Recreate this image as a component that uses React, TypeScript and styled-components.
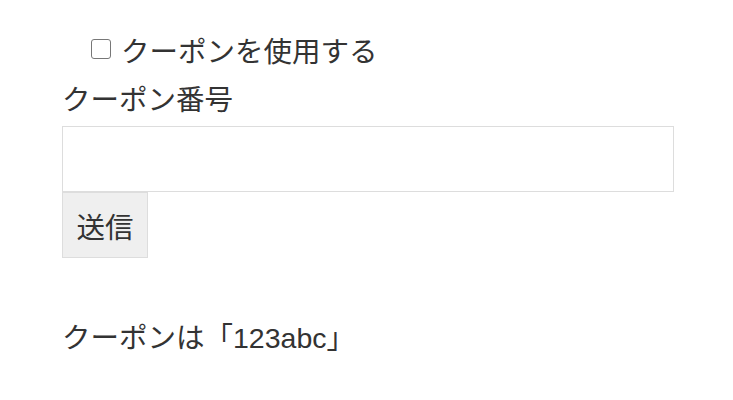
import React from "react";
import styled, { createGlobalStyle } from "styled-components";

const GlobalStyle = createGlobalStyle`
  body {
    margin: 0;
    background: #ffffff;
    font-family: "Liberation Sans", "Noto Sans CJK JP", sans-serif;
    color: #333333;
  }
`;

const Page = styled.div`
  padding: 32px 59px 0 62px;
  display: flex;
  flex-direction: column;
`;

const CheckRow = styled.label`
  display: flex;
  align-items: center;
  gap: 10px;
  margin-left: 29px;
  height: 34px;
  font-size: 28.5px;
`;

const Box = styled.input.attrs({ type: "checkbox" })`
  appearance: none;
  margin: 0;
  width: 20px;
  height: 20px;
  border: 1.5px solid #777777;
  border-radius: 3px;
  background: #ffffff;
`;

const Label = styled.div`
  margin-top: 17px;
  font-size: 28.5px;
  line-height: 34px;
`;

const Field = styled.input`
  box-sizing: border-box;
  margin-top: 9px;
  width: 612px;
  height: 66px;
  border: 1px solid #dddddd;
  outline: none;
  font-size: 26px;
`;

const Submit = styled.button`
  box-sizing: border-box;
  width: 86px;
  height: 66px;
  margin: 0;
  border: 1px solid #dddddd;
  background: #efefef;
  color: #333333;
  font-family: inherit;
  font-size: 28.5px;
  padding: 0;
`;

const Result = styled.div`
  margin-top: 63px;
  font-size: 28.5px;
  line-height: 34px;
`;

export default function App() {
  return (
    <>
      <GlobalStyle />
      <Page>
        <CheckRow>
          <Box />
          クーポンを使用する
        </CheckRow>
        <Label>クーポン番号</Label>
        <Field />
        <div>
          <Submit>送信</Submit>
        </div>
        <Result>クーポンは「123abc」</Result>
      </Page>
    </>
  );
}
